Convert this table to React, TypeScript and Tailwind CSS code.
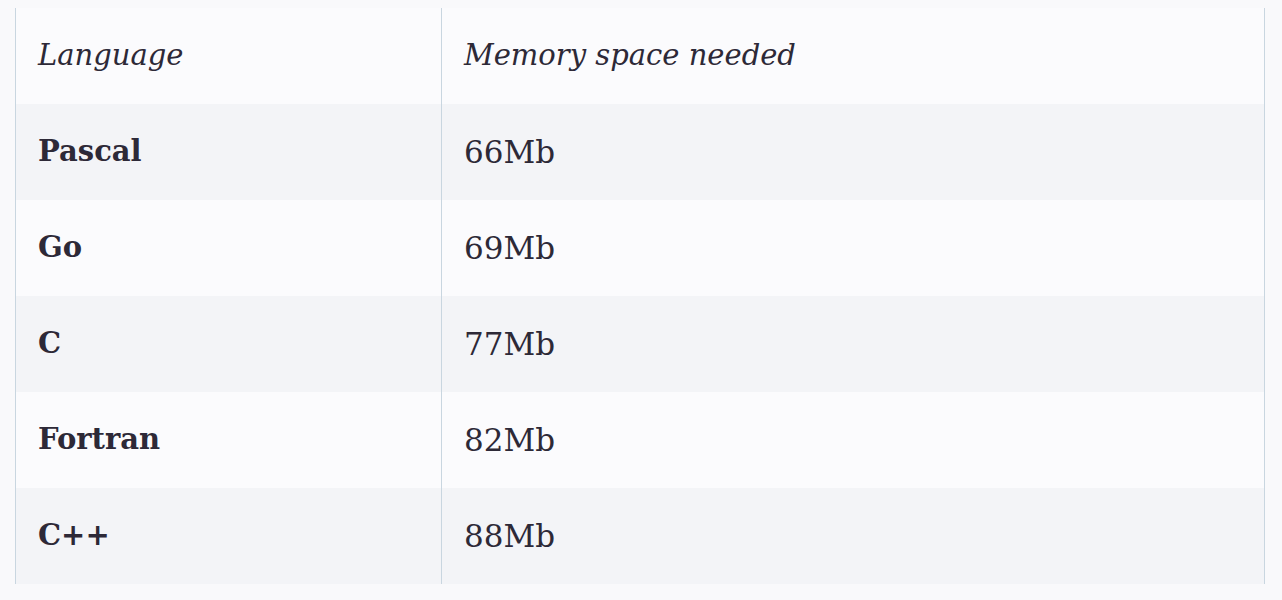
const rows = [
  { lang: "Pascal", mem: "66Mb" },
  { lang: "Go", mem: "69Mb" },
  { lang: "C", mem: "77Mb" },
  { lang: "Fortran", mem: "82Mb" },
  { lang: "C++", mem: "88Mb" },
];

export default function App() {
  return (
    <div className="min-h-[600px] bg-[#f9f9fb] pt-2 pl-[15px] pr-[17px] font-['DejaVu_Serif',serif] text-[#2d2937]">
      <div className="border-x border-[#c9d6e0]">
        <div className="grid grid-cols-[426px_1fr] h-24 bg-[#fbfbfd] items-center italic text-[29px]">
          <div className="pl-[22px] border-r border-[#c9d6e0] h-full flex items-center">Language</div>
          <div className="pl-[22px]">Memory space needed</div>
        </div>
        {rows.map((r, i) => (
          <div
            key={r.lang}
            className={`grid grid-cols-[426px_1fr] h-[96px] items-center text-[31px] ${i % 2 === 0 ? "bg-[#f3f4f7]" : "bg-[#fbfbfd]"}`}
          >
            <div className="pl-[22px] border-r border-[#c9d6e0] h-full flex items-center font-bold text-[29px]">{r.lang}</div>
            <div className="pl-[22px]">{r.mem}</div>
          </div>
        ))}
      </div>
    </div>
  );
}
